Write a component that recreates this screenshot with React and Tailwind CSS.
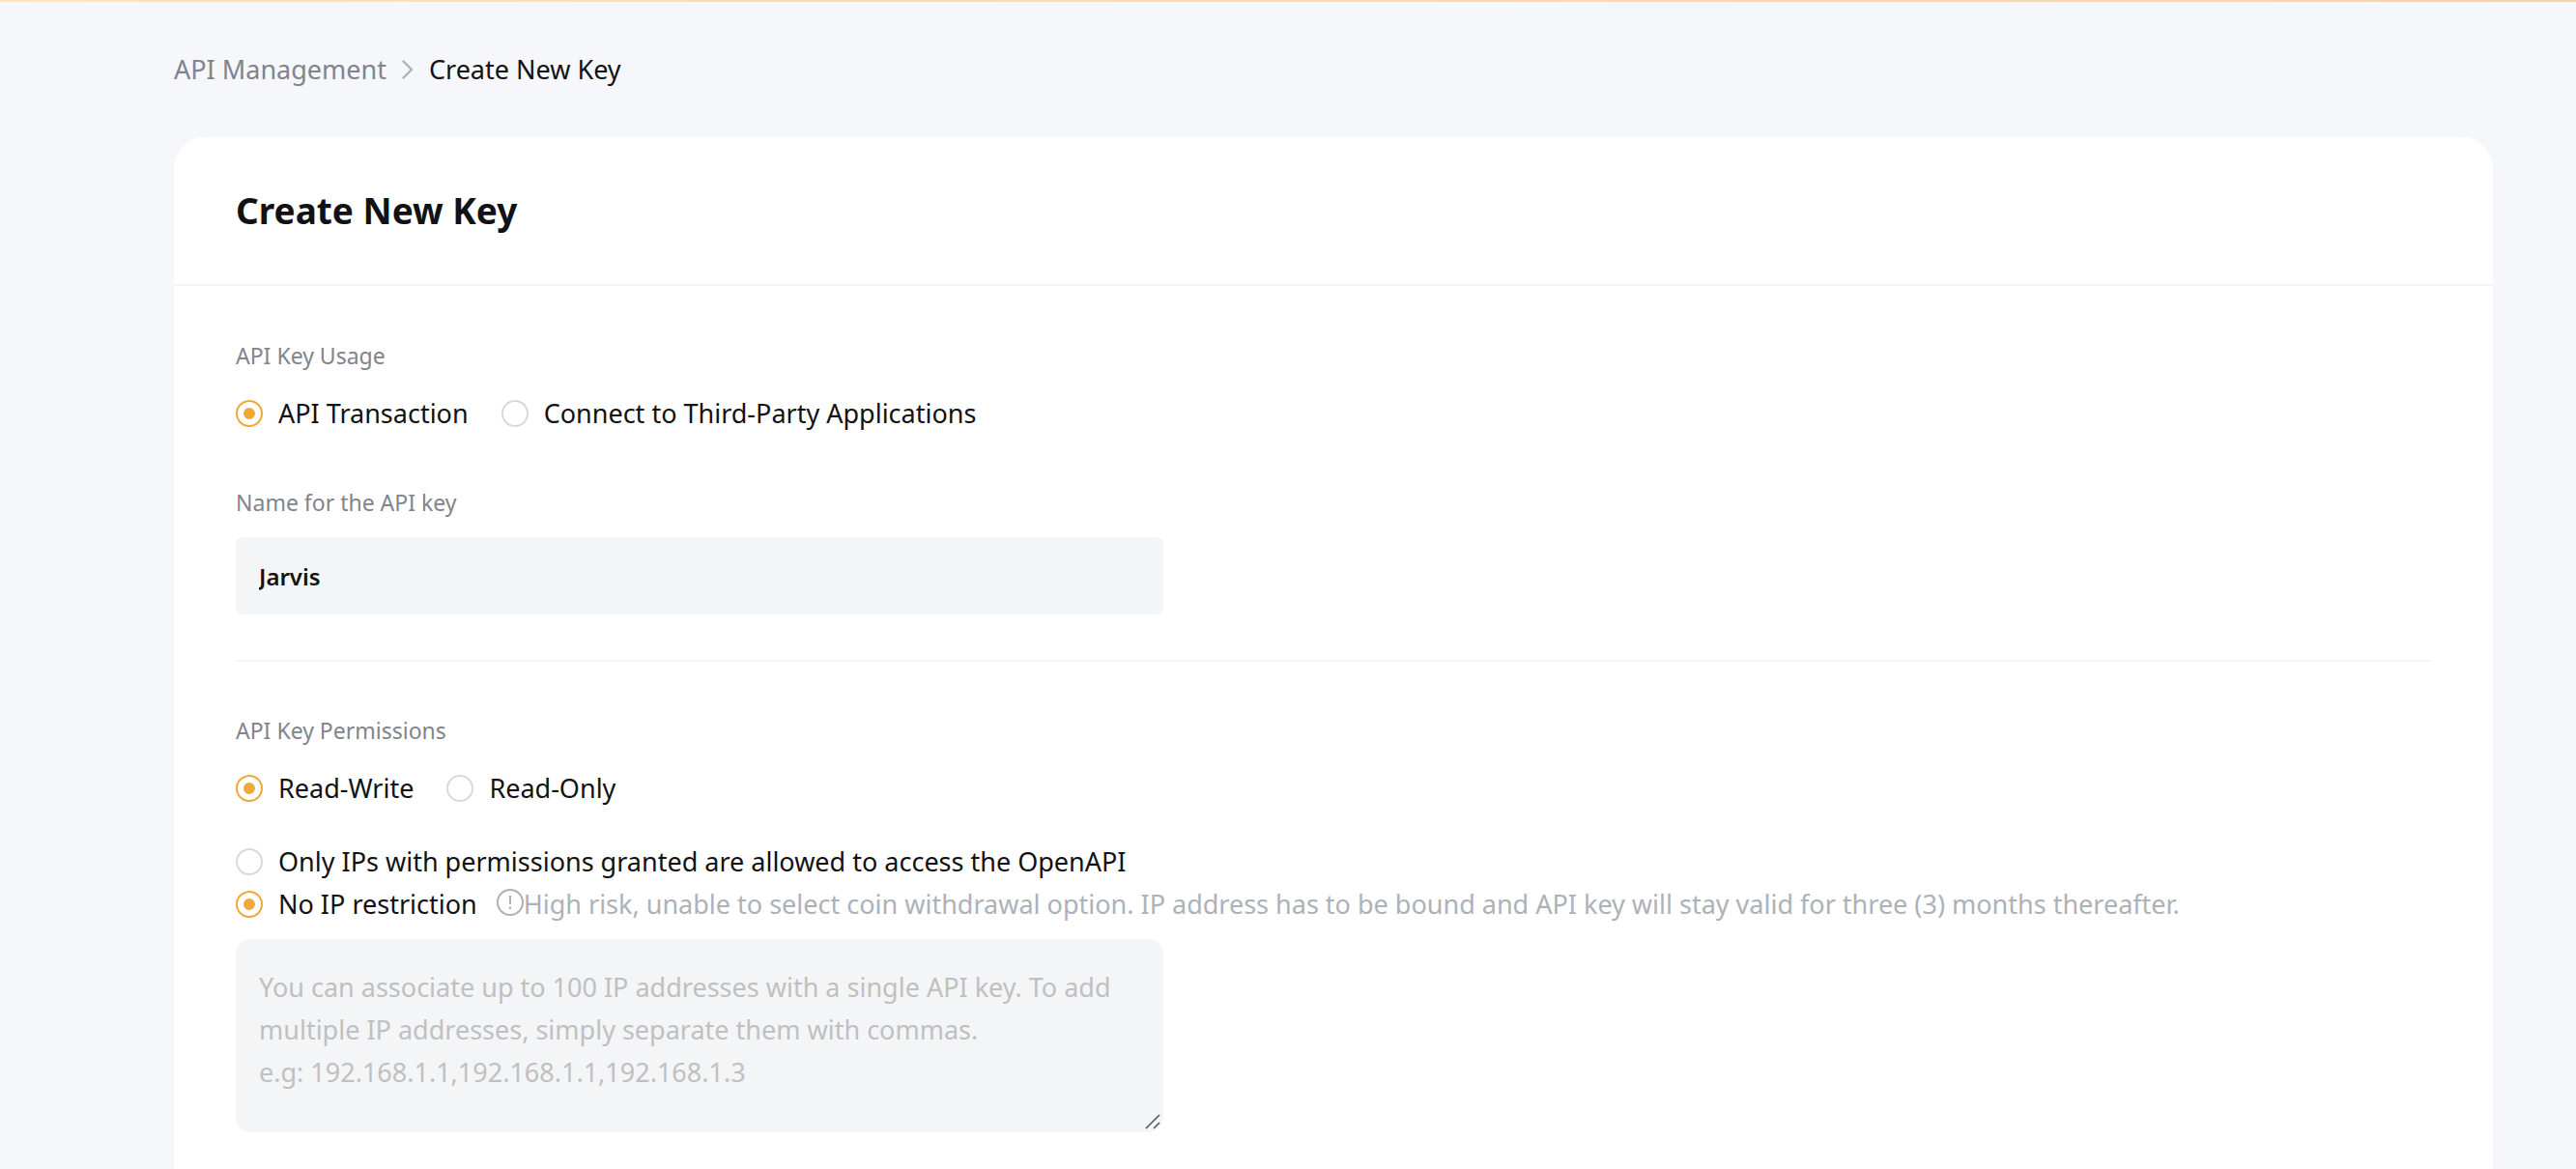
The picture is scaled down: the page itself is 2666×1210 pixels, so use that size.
import { useState } from "react";

function RadioOption({ name, value, selected, onSelect, label }) {
  return (
    <label className="flex cursor-pointer items-center gap-4 text-[27px] leading-[44px] text-[#121214]">
      <input
        type="radio"
        name={name}
        value={value}
        checked={selected === value}
        onChange={() => onSelect(value)}
        className="grid size-7 shrink-0 cursor-pointer appearance-none place-content-center rounded-full border-2 border-[#d5dae0] bg-white before:size-3 before:rounded-full checked:border-[#efa93a] checked:before:bg-[#efa93a]"
      />
      <span>{label}</span>
    </label>
  );
}

function ChevronIcon() {
  return (
    <svg viewBox="0 0 12 20" className="h-5 w-3" fill="none" stroke="#adb1b8" strokeWidth="2.4" strokeLinecap="round" strokeLinejoin="round" aria-hidden="true">
      <path d="M1.5 1.5 10 10 1.5 18.5" />
    </svg>
  );
}

function WarningIcon() {
  return (
    <svg viewBox="0 0 28 28" className="mb-1 size-7 shrink-0" fill="none" stroke="#adb1b8" strokeWidth="2" aria-hidden="true">
      <circle cx="14" cy="14" r="13" />
      <path d="M14 7v9M14 18.5v2.4" />
    </svg>
  );
}

function Breadcrumb() {
  return (
    <nav aria-label="Breadcrumb" className="flex items-center gap-4 py-12 text-[27px] leading-[44px]">
      <a href="#api-management" className="text-[#81848c]">API Management</a>
      <ChevronIcon />
      <span aria-current="page" className="text-[#121214]">Create New Key</span>
    </nav>
  );
}

export default function App() {
  const [usage, setUsage] = useState("transaction");
  const [access, setAccess] = useState("read-write");
  const [ipRule, setIpRule] = useState("none");

  return (
    <div className="flex min-h-screen flex-col bg-[#f5f7fb] font-['Noto_Sans',sans-serif]">
      <div className="h-0.5 bg-linear-to-r from-[#fce6a8] to-[#f8d699]" />
      <div className="mr-[86px] ml-[180px] flex grow flex-col">
        <Breadcrumb />
        <main className="grow rounded-t-[32px] bg-white">
          <header className="border-b-2 border-[#f5f5f6] px-16 py-[52px]">
            <h1 className="text-[37px] leading-[48px] font-bold text-[#121214]">Create New Key</h1>
          </header>
          <form className="px-16 pt-[54px]" onSubmit={(e) => e.preventDefault()}>
            <fieldset>
              <legend className="text-[23px] leading-9 text-[#81848c]">API Key Usage</legend>
              <div className="mt-5 flex gap-[34px]">
                <RadioOption name="usage" value="transaction" selected={usage} onSelect={setUsage} label="API Transaction" />
                <RadioOption name="usage" value="third-party" selected={usage} onSelect={setUsage} label="Connect to Third-Party Applications" />
              </div>
            </fieldset>

            <label htmlFor="key-name" className="mt-[52px] block text-[23px] leading-9 text-[#81848c]">
              Name for the API key
            </label>
            <input
              id="key-name"
              type="text"
              defaultValue="Jarvis"
              className="mt-[18px] block h-20 w-full max-w-[960px] rounded-lg bg-[#f3f5f7] px-6 text-[24px] font-semibold text-[#121214] outline-none"
            />

            <hr className="mt-[47px] border-t-2 border-[#f5f5f6]" />

            <fieldset className="mt-[53px]">
              <legend className="text-[23px] leading-9 text-[#81848c]">API Key Permissions</legend>
              <div className="mt-5 flex gap-[34px]">
                <RadioOption name="access" value="read-write" selected={access} onSelect={setAccess} label="Read-Write" />
                <RadioOption name="access" value="read-only" selected={access} onSelect={setAccess} label="Read-Only" />
              </div>
            </fieldset>

            <div role="radiogroup" aria-label="IP restriction" className="mt-8">
              <RadioOption name="ip" value="bound" selected={ipRule} onSelect={setIpRule} label="Only IPs with permissions granted are allowed to access the OpenAPI" />
              <div className="flex items-center gap-5">
                <RadioOption name="ip" value="none" selected={ipRule} onSelect={setIpRule} label="No IP restriction" />
                <p className="flex items-center text-[27px] leading-[44px] text-[#adb1b8]">
                  <WarningIcon />
                  High risk, unable to select coin withdrawal option. IP address has to be bound and API key will stay valid for three (3) months thereafter.
                </p>
              </div>
            </div>

            <div className="relative mt-[14px] max-w-[960px]">
              <textarea
                aria-label="IP addresses"
                placeholder={"You can associate up to 100 IP addresses with a single API key. To add multiple IP addresses, simply separate them with commas.\ne.g: 192.168.1.1,192.168.1.1,192.168.1.3"}
                className="block h-[200px] w-full resize-none rounded-2xl bg-[#f3f5f7] px-6 py-7 text-[27px] leading-[44px] text-[#121214] outline-none placeholder:text-[#c0c0c0]"
              />
              <svg viewBox="0 0 16 16" className="absolute right-[3px] bottom-[3px] size-4" fill="none" stroke="#55575b" strokeWidth="1.6" aria-hidden="true">
                <path d="M1 15 15 1M9 15l6-6" />
              </svg>
            </div>
          </form>
        </main>
      </div>
    </div>
  );
}
